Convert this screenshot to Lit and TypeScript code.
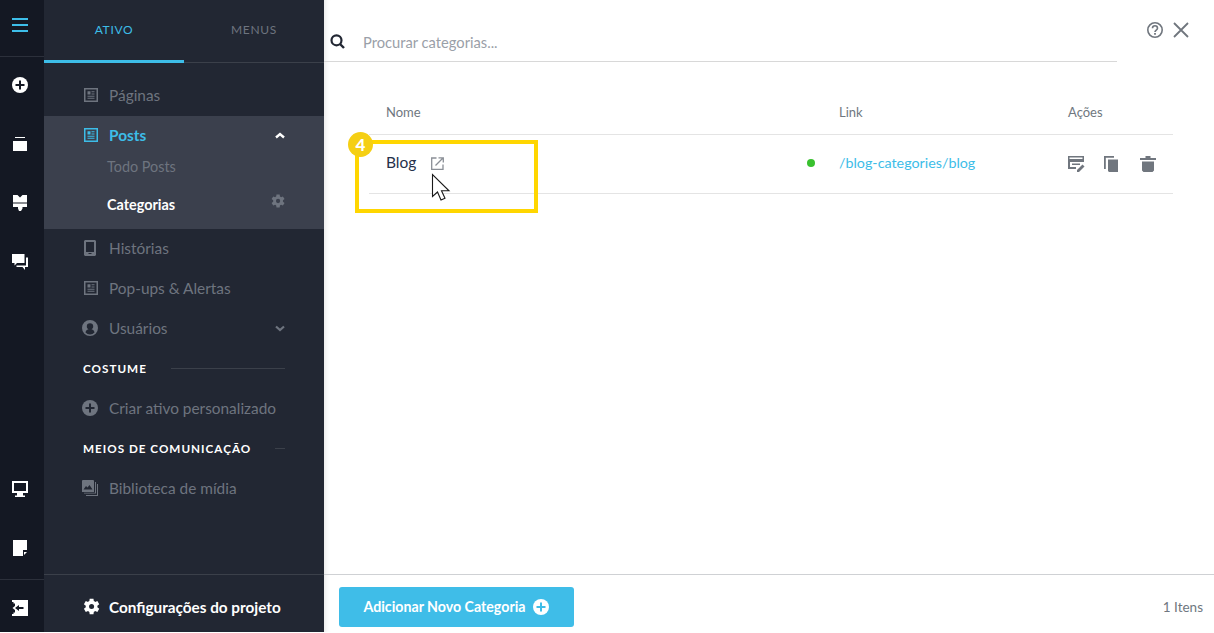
import { LitElement, html, css, svg } from "lit";
import { customElement } from "lit/decorators.js";

const doc = (c: string) => svg`<svg class="ic" width="14" height="14" viewBox="0 0 14 14"><path fill="${c}" fill-rule="evenodd" d="M0 0h14v14H0zM1.500 1.500v11h11v-11zM3.500 3.300h3v3.200h-3zM7.500 3.300h3v1h-3zM7.500 5.500h3v1h-3zM3.500 7.800h7v1h-7zM3.500 9.800h7v1h-7z"/></svg>`;
const gear = (c: string, s: number) => svg`<svg width="${s}" height="${s}" viewBox="0 0 24 24"><path fill="${c}" d="M19.400 13a7.500 7.500 0 0 0 0-2l2.400-1.900-2.400-4-2.800 1.100a7.600 7.600 0 0 0-1.700-1L14.500 2.200h-4.800l-.4 3a7.600 7.600 0 0 0-1.700 1L4.800 5.100l-2.400 4L4.800 11a7.500 7.500 0 0 0 0 2l-2.400 1.900 2.400 4 2.800-1.100a7.600 7.600 0 0 0 1.700 1l.4 3h4.800l.4-3a7.600 7.600 0 0 0 1.700-1l2.800 1.100 2.400-4zM12.100 15.200a3.200 3.200 0 1 1 0-6.400 3.200 3.200 0 0 1 0 6.400z"/></svg>`;
const plusCircle = (bg: string, fg: string, s: number) => svg`<svg width="${s}" height="${s}" viewBox="0 0 16 16"><circle cx="8" cy="8" r="8" fill="${bg}"/><path fill="${fg}" d="M7 3.500h2V7h3.500v2H9v3.500H7V9H3.500V7H7z"/></svg>`;

@customElement("app-root")
export class AppRoot extends LitElement {
  static styles = css`
    :host { display: flex; width: 1214px; height: 632px; overflow: hidden; font-family: "Lato", "Noto Sans", sans-serif; background: #fff; position: relative; }
    svg { display: block; flex: none; }
    .rail { width: 44px; flex: none; background: #141823; display: flex; flex-direction: column; }
    .rail-top { height: 57px; flex: none; border-bottom: 1px solid #2c303b; display: flex; justify-content: center; padding: 18px 4px 0 0; box-sizing: border-box; }
    .rail-mid { flex: 1; display: flex; flex-direction: column; align-items: center; padding-top: 21px; }
    .rail-mid .cell { height: 59px; display: flex; justify-content: center; flex: none; width: 100%; padding-right: 4px; box-sizing: border-box; }
    .rail-mid .cell.up svg { margin-top: -1px; }
    .rail-mid .cell.h58 { height: 58px; }
    .rail-mid .cell.h39 { height: 39px; }
    .rail-spacer { flex: 1; }
    .rail-bottom { height: 53px; flex: none; border-top: 1px solid #2c303b; display: flex; justify-content: center; padding: 20px 4px 0 0; box-sizing: border-box; }
    .side { width: 280px; flex: none; background: #222733; display: flex; flex-direction: column; color: #6e747f; font-size: 15.400px; }
    .tabs { display: flex; height: 63px; flex: none; border-bottom: 1px solid #3b404a; box-sizing: border-box; font-size: 12px; letter-spacing: 0.7px; }
    .tab { width: 140px; height: 63px; box-sizing: border-box; display: flex; justify-content: center; padding-top: 22px; color: #6e747f; }
    .tab.on { color: #3dbde8; border-bottom: 3px solid #3dbde8; }
    .nav { padding-top: 13px; flex: 1; display: flex; flex-direction: column; }
    .item { height: 40px; box-sizing: border-box; display: flex; align-items: center; padding: 0 39px 2px 39px; flex: none; }
    .item .ic-box { width: 26px; flex: none; display: flex; box-sizing: border-box; }
    .item .ic-box.doc { padding-left: 1px; }
    .item .ic-box.wide { margin-left: -1px; width: 27px; }
    .item span.lab { flex: 1; }
    .group { background: #3b404d; height: 113px; flex: none; display: flex; flex-direction: column; }
    .group .item { color: #3dbde8; font-weight: 700; }
    .sub { display: flex; align-items: center; justify-content: space-between; padding: 0 38px 0 63px; font-size: 14.400px; height: 37px; flex: none; }
    .sub.first { margin-top: -8px; }
    .sub.act { color: #fff; font-weight: 700; padding-top: 1px; }
    .sub.act svg { margin-top: -7px; }
    .head { display: flex; align-items: center; gap: 24px; padding: 0 39px 2px; height: 40px; box-sizing: border-box; color: #fff; font-size: 11.700px; font-weight: 700; letter-spacing: 1px; flex: none; white-space: nowrap; }
    .head i { flex: 1; height: 1px; background: #3b404a; }
    .foot { height: 58px; flex: none; border-top: 1px solid #3b404a; display: flex; align-items: center; gap: 8px; padding: 6px 38px 0; color: #fff; font-weight: 700; font-size: 15.300px; box-sizing: border-box; }
    .main { flex: 1; display: flex; flex-direction: column; box-shadow: inset 6px 0 6px -6px rgba(0,0,0,.15); min-width: 0; }
    .top { height: 62px; flex: none; display: flex; }
    .search { width: 793px; flex: none; height: 62px; box-sizing: border-box; border-bottom: 1px solid #d8d8d8; display: flex; align-items: center; gap: 18px; padding: 22px 0 0 6px; font-size: 14.700px; color: #9aa0a8; }
    .tools { display: flex; gap: 8px; padding: 21px 0 0 29px; }
    .body { flex: 1; padding: 0 41px 0 45px; min-height: 0; }
    .row { display: grid; grid-template-columns: 421px 32px 229px 1fr; align-items: center; padding-left: 17px; }
    .thead { height: 73px; padding-top: 28px; box-sizing: border-box; border-bottom: 1px solid #e4e4e4; font-size: 13px; color: #6f7780; }
    .trow { height: 59px; box-sizing: border-box; border-bottom: 1px solid #e4e4e4; padding-bottom: 4px; }
    .name { display: flex; align-items: center; gap: 15px; font-size: 15.500px; color: #25304a; }
    .name svg { margin-top: 2px; }
    .dot { width: 8px; height: 8px; border-radius: 50%; background: #39c12f; margin: 2px 0 0 0; }
    .link { font-size: 14.300px; color: #3dbde8; }
    .acts { display: flex; gap: 18px; margin-left: -1px; }
    .bottom { height: 58px; flex: none; border-top: 1px solid #cfd1d4; display: flex; align-items: center; justify-content: space-between; padding: 6px 11px 0 15px; box-sizing: border-box; }
    .btn { width: 235px; height: 40px; border-radius: 3px; background: #3fbde8; color: #fff; font-weight: 700; font-size: 14.200px; display: flex; align-items: center; justify-content: center; gap: 8px; }
    .count { font-size: 13.500px; color: #6f7780; }
    .mark { position: absolute; left: 355px; top: 140px; width: 183px; height: 73px; box-sizing: border-box; border: 4px solid #ffd600; pointer-events: none; }
    .badge { position: absolute; left: 348px; top: 132px; width: 25px; height: 25px; border-radius: 50%; background: #f5cf14; color: #fff; font-weight: 900; font-size: 17px; display: flex; align-items: center; justify-content: center; }
    .cursor { position: absolute; left: 431px; top: 173px; }
  `;

  render() {
    const g = "#6e747f";
    const a = "#70767e";
    const d = "#141823";
    return html`
      <div class="rail">
        <div class="rail-top"><svg width="16" height="14" viewBox="0 0 16 14"><path fill="#3dbde8" d="M0 0h16v2H0zM0 6h16v2H0zM0 12h16v2H0z"/></svg></div>
        <div class="rail-mid">
          <div class="cell up">${plusCircle("#fff", d, 16)}</div>
          <div class="cell h58"><svg width="14" height="14" viewBox="0 0 14 14"><path fill="#fff" d="M2 0h10v1H2zM0 4h14v10H0z"/></svg></div>
          <div class="cell"><svg width="14" height="16" viewBox="0 0 14 16"><path fill="#fff" d="M0 0h4.500L7 2.500 9.500 0H14v7.500H0zM0 8.500h14v3.500H9.500v1.500L8 16H6l-1-2.500V12H0z"/></svg></div>
          <div class="cell"><svg width="16" height="16" viewBox="0 0 16 16"><path fill="#fff" d="M0 0h12.500v9H5l-2.500 2.500V9H0z"/><path fill="#fff" d="M14 3.500h2V13h-3v3l-2.500-3H4.500v-1.500H14z"/></svg></div>
          <div class="rail-spacer"></div>
          <div class="cell"><svg width="16" height="16" viewBox="0 0 16 16"><path fill="#fff" fill-rule="evenodd" d="M0 0h16v12h-5v2.500h2V16H3v-1.500h2V12H0zM2 2v8h12V2z"/></svg></div>
          <div class="cell h39"><svg width="14" height="16" viewBox="0 0 14 16"><path fill="#fff" d="M0 0h14v10h-4v6H0z"/><path fill="#fff" d="M11 12h3l-3 3z"/></svg></div>
        </div>
        <div class="rail-bottom"><svg width="16" height="16" viewBox="0 0 16 16"><path fill="#fff" d="M0 0h16v16H0v-2h1.500v-1.500h1.500V3.500H1.500V2H0z"/><path fill="${d}" d="M3 8l4-3v2h4.500v2H7v2z"/><path fill="#fff" d="M.5 8L3 6v4z"/></svg></div>
      </div>
      <div class="side">
        <div class="tabs"><div class="tab on">ATIVO</div><div class="tab">MENUS</div></div>
        <div class="nav">
          <div class="item"><div class="ic-box doc">${doc(g)}</div><span class="lab">Páginas</span></div>
          <div class="group">
            <div class="item"><div class="ic-box doc">${doc("#3dbde8")}</div><span class="lab">Posts</span>
              <svg width="10" height="7" viewBox="0 0 10 7"><path fill="none" stroke="#fff" stroke-width="2.400" d="M1 5.500l4-3.500 4 3.500"/></svg></div>
            <div class="sub first">Todo Posts</div>
            <div class="sub act">Categorias ${gear(g, 16)}</div>
          </div>
          <div class="item"><div class="ic-box doc"><svg width="12" height="16" viewBox="0 0 12 16"><path fill="${g}" fill-rule="evenodd" d="M1 0h10l1 1v14l-1 1H1l-1-1V1zM2 2v10h8V2zM4.500 13h3v1h-3z"/></svg></div><span class="lab">Histórias</span></div>
          <div class="item"><div class="ic-box doc">${doc(g)}</div><span class="lab">Pop-ups &amp; Alertas</span></div>
          <div class="item"><div class="ic-box wide"><svg width="16" height="16" viewBox="0 0 16 16"><path fill="${g}" fill-rule="evenodd" d="M8 0a8 8 0 1 1 0 16A8 8 0 0 1 8 0zM8 3.200a3.200 3.200 0 0 0-3.200 3.300c0 1.300.7 2.300 1.700 2.800C4.500 9.800 3.700 11 3.500 12.500a6 6 0 0 0 9 0c-.2-1.500-1-2.700-3-3.200 1-.5 1.700-1.500 1.700-2.800A3.200 3.200 0 0 0 8 3.200z"/></svg></div><span class="lab">Usuários</span>
            <svg width="10" height="7" viewBox="0 0 10 7"><path fill="none" stroke="${g}" stroke-width="2.200" d="M1 1.500l4 3.500 4-3.500"/></svg></div>
          <div class="head">COSTUME <i></i></div>
          <div class="item"><div class="ic-box wide">${plusCircle(g, "#222733", 16)}</div><span class="lab">Criar ativo personalizado</span></div>
          <div class="head">MEIOS DE COMUNICAÇÃO <i></i></div>
          <div class="item"><div class="ic-box wide"><svg width="16" height="16" viewBox="0 0 16 16"><path fill="${g}" d="M0 1a1 1 0 0 1 1-1h10a1 1 0 0 1 1 1v11H0z"/><path fill="#222733" d="M1.500 9.500l2.500-3.500 1.500 1.500L7.500 5l3 4.500z"/><path fill="${g}" d="M13 2h1v11.500H2v-.8h11zM15 4h1v12H4v-1h11z"/></svg></div><span class="lab">Biblioteca de mídia</span></div>
        </div>
        <div class="foot">${gear("#fff", 19)}<span>Configurações do projeto</span></div>
      </div>
      <div class="main">
        <div class="top">
          <div class="search">
            <svg width="15" height="15" viewBox="0 0 15 15"><circle cx="6.500" cy="6.300" r="5" fill="none" stroke="#222733" stroke-width="2.200"/><path stroke="#222733" stroke-width="2.400" d="M10 10l4 4"/></svg>
            <span>Procurar categorias...</span>
          </div>
          <div class="tools">
            <svg width="18" height="18" viewBox="0 0 18 18"><circle cx="9" cy="9" r="7.200" fill="none" stroke="${a}" stroke-width="1.600"/><path fill="none" stroke="${a}" stroke-width="1.600" d="M6.500 7.200c0-3.200 5-3.200 5 0 0 1.900-2.500 1.900-2.500 3.800"/><path fill="${a}" d="M8.100 12h1.800v1.800H8.100z"/></svg>
            <svg width="18" height="18" viewBox="0 0 18 18"><path stroke="${a}" stroke-width="1.800" d="M2 2l14 14M16 2L2 16"/></svg>
          </div>
        </div>
        <div class="body">
          <div class="row thead"><div>Nome</div><div></div><div>Link</div><div>Ações</div></div>
          <div class="row trow">
            <div class="name">Blog
              <svg width="13" height="13" viewBox="0 0 13 13"><path fill="none" stroke="#8a8f96" stroke-width="1.300" d="M5.500 1H.7v11.300H12V7.500M4.500 8.500L11.500 1.500M7.500.8h4.800v4.800"/></svg></div>
            <div><div class="dot"></div></div>
            <div class="link">/blog-categories/blog</div>
            <div class="acts">
              <svg width="18" height="20" viewBox="0 0 18 20"><path fill="${a}" fill-rule="evenodd" d="M1 4h16v6H1zM2.500 5.500V7h13V5.500z"/><path fill="${a}" d="M1 10h2v5h6v2H1zM5 11.500h8v1.500H5z"/><path fill="${a}" d="M15.500 12.500l2 2-5.500 5.500h-2v-2z"/></svg>
              <svg width="18" height="20" viewBox="0 0 18 20"><path fill="${a}" d="M1 4h10v1.800H2.800V17H1z"/><path fill="${a}" d="M5 7.500h10V20H6l-1-1z"/></svg>
              <svg width="18" height="20" viewBox="0 0 18 20"><path fill="${a}" d="M6.500 4h5v2H17v2H1V6h5.500zM3 9.500h12V18.500L13.500 20h-9L3 18.500z"/></svg>
            </div>
          </div>
        </div>
        <div class="bottom">
          <div class="btn">Adicionar Novo Categoria ${plusCircle("#fff", "#3fbde8", 16)}</div>
          <div class="count">1 Itens</div>
        </div>
      </div>
      <div class="mark"></div>
      <div class="badge">4</div>
      <svg class="cursor" width="20" height="29" viewBox="0 0 20 29"><path fill="#fff" stroke="#1a1a1a" stroke-width="1.100" d="M1.500 1.500v22l5-4.500 3.500 8 4-1.700-3.500-7.500H18z"/></svg>
    `;
  }
}
